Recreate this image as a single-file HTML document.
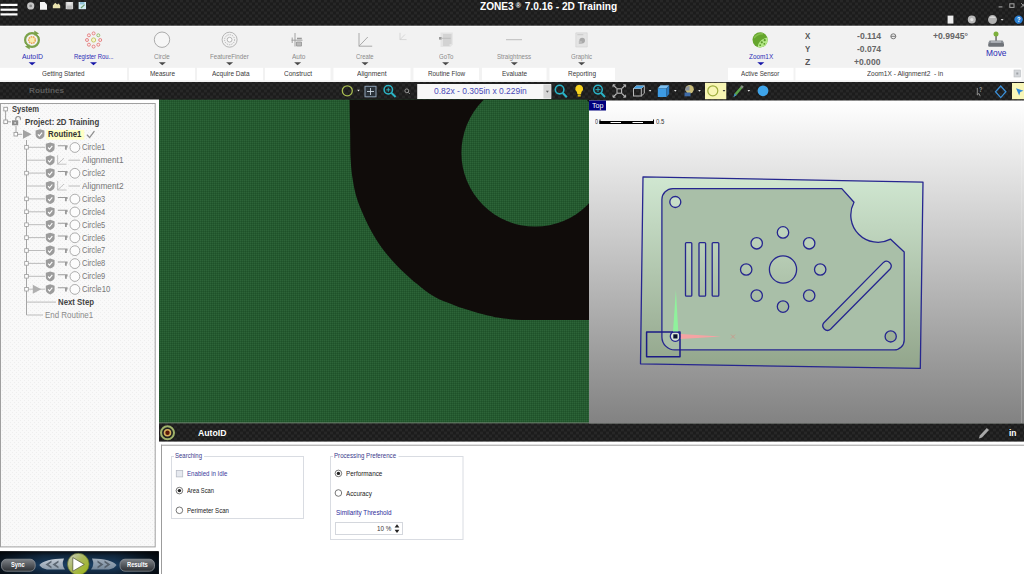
<!DOCTYPE html>
<html lang="en">
<head>
<meta charset="utf-8">
<title>ZONE3 7.0.16 - 2D Training</title>
<style>
html,body{margin:0;padding:0;width:1024px;height:574px;overflow:hidden;background:#1e1e1e;}
body{position:relative;font-family:"Liberation Sans",sans-serif;}
#bg{position:absolute;left:0;top:0;width:1024px;height:574px;display:block;}
.t{position:absolute;white-space:nowrap;line-height:1;transform-origin:0 50%;margin:0;padding:0;}
.b{font-weight:bold;}
</style>
</head>
<body>
<svg id="bg" width="1024" height="574" viewBox="0 0 1024 574">
<defs>
  <pattern id="carbon" width="6" height="6" patternUnits="userSpaceOnUse">
    <rect width="6" height="6" fill="#202020"/>
    <rect x="0" y="0" width="3" height="2" fill="#272727"/>
    <rect x="3" y="3" width="3" height="2" fill="#272727"/>
    <rect x="3" y="0" width="3" height="2" fill="#1c1c1c"/>
    <rect x="0" y="3" width="3" height="2" fill="#1c1c1c"/>
  </pattern>
  <pattern id="noise" width="2" height="2" patternUnits="userSpaceOnUse">
    <rect width="2" height="2" fill="#255a30"/>
    <rect x="0" y="0" width="1" height="1" fill="#2d6438"/>
    <rect x="1" y="1" width="1" height="1" fill="#1f5129"/>
  </pattern>
  <pattern id="dots" width="4" height="4" patternUnits="userSpaceOnUse">
    <rect width="4" height="4" fill="#f9f9f9"/>
    <rect x="0" y="0" width="1" height="1" fill="#eeeeee"/>
    <rect x="2" y="2" width="1" height="1" fill="#eeeeee"/>
  </pattern>
  <linearGradient id="g3d" x1="0" y1="0" x2="0" y2="1">
    <stop offset="0" stop-color="#ffffff"/>
    <stop offset="1" stop-color="#828282"/>
  </linearGradient>
  <linearGradient id="gpart" gradientUnits="userSpaceOnUse" x1="0" y1="177" x2="0" y2="369">
    <stop offset="0" stop-color="#d0e7d1"/>
    <stop offset="1" stop-color="#92a58b"/>
  </linearGradient>
  <linearGradient id="gplayer" x1="0" y1="0" x2="0" y2="1">
    <stop offset="0" stop-color="#080d14"/>
    <stop offset="0.18" stop-color="#10253a"/>
    <stop offset="0.6" stop-color="#1b3f63"/>
    <stop offset="1" stop-color="#0f2236"/>
  </linearGradient>
  <linearGradient id="gbtn" x1="0" y1="0" x2="0" y2="1">
    <stop offset="0" stop-color="#7f8388"/>
    <stop offset="0.5" stop-color="#54585d"/>
    <stop offset="1" stop-color="#2c2f33"/>
  </linearGradient>
  <linearGradient id="gplay" x1="0.1" y1="0.1" x2="0.9" y2="0.9">
    <stop offset="0" stop-color="#c6cbb4"/>
    <stop offset="0.45" stop-color="#a9b75a"/>
    <stop offset="1" stop-color="#9db51f"/>
  </linearGradient>
  <linearGradient id="gwing" x1="0" y1="0" x2="0" y2="1">
    <stop offset="0" stop-color="#c3ccd6"/>
    <stop offset="1" stop-color="#8d9cab"/>
  </linearGradient>
  <linearGradient id="gpedge" x1="0" y1="0" x2="1" y2="0">
    <stop offset="0" stop-color="#000" stop-opacity="0.650"/>
    <stop offset="0.28" stop-color="#000" stop-opacity="0"/>
    <stop offset="0.72" stop-color="#000" stop-opacity="0"/>
    <stop offset="1" stop-color="#000" stop-opacity="0.750"/>
  </linearGradient>
  <clipPath id="camclip"><rect x="159" y="99.700" width="430" height="323.100"/></clipPath>
</defs>
<!-- dark chrome -->
<rect x="0" y="0" width="1024" height="574" fill="url(#carbon)"/>
<!-- ribbon -->
<rect x="0" y="25.700" width="1024" height="56.300" fill="#f2f2f2"/>
<rect x="0" y="26" width="1024" height="1" fill="#fafafa"/>
<g fill="#ffffff">
  <rect x="0" y="67.800" width="127" height="12.500"/>
  <rect x="129" y="67.800" width="66" height="12.500"/>
  <rect x="197" y="67.800" width="66" height="12.500"/>
  <rect x="265" y="67.800" width="65.5" height="12.500"/>
  <rect x="333.5" y="67.800" width="77" height="12.500"/>
  <rect x="413.5" y="67.800" width="65.5" height="12.500"/>
  <rect x="482" y="67.800" width="64.5" height="12.500"/>
  <rect x="549.5" y="67.800" width="65.5" height="12.500"/>
  <rect x="728" y="67.800" width="65.5" height="12.500"/>
  <rect x="795.500" y="67.800" width="226" height="12.500"/>
</g>
<!-- left panel -->
<rect x="0" y="99.500" width="159" height="452" fill="#ffffff"/>
<rect x="0.500" y="103.500" width="154.700" height="443.400" fill="url(#dots)" stroke="#a0a0a0" stroke-width="1"/>
<!-- camera view -->
<rect x="159" y="99.700" width="430" height="323.100" fill="url(#noise)"/>
<rect x="159" y="422.500" width="865" height="0.800" fill="#7f947f"/>
<g clip-path="url(#camclip)">
  <path d="M349.6 99.0 C349.7 104.2 349.9 119.8 350.1 130.0 C350.3 140.2 350.2 151.7 350.7 160.0 C351.1 168.3 351.8 173.8 352.8 180.0 C353.8 186.2 354.9 191.7 356.6 197.4 C358.3 203.2 360.7 208.8 363.2 214.5 C365.7 220.2 368.3 225.8 371.5 231.5 C374.7 237.2 378.1 242.8 382.3 248.5 C386.5 254.2 392.0 260.4 396.8 265.5 C401.6 270.6 407.0 275.4 411.0 279.0 C415.0 282.6 417.5 284.4 420.7 286.9 C423.9 289.4 426.9 291.9 430.0 294.0 C433.1 296.1 436.0 297.7 439.1 299.2 C442.2 300.7 445.6 301.8 448.8 303.1 C452.1 304.4 455.3 305.9 458.6 307.0 C461.9 308.1 465.1 309.0 468.4 310.0 C471.6 311.0 474.9 312.1 478.1 313.0 C481.4 313.9 484.6 314.7 487.9 315.5 C491.2 316.3 494.0 317.0 497.7 317.6 C501.4 318.2 505.9 318.8 510.0 319.2 C514.0 319.6 517.8 319.8 522.0 319.9 C526.2 320.0 523.7 320.0 535.0 320.0 C546.3 320.0 580.8 320.0 590.0 320.0 L590 99 Z" fill="#100c0a"/>
  <circle cx="535.200" cy="152.800" r="73.800" fill="url(#noise)"/>
</g>
<!-- 3D view -->
<rect x="589" y="100.500" width="435" height="323" fill="url(#g3d)"/>
<!-- AutoID bar is carbon already: 423-442 -->
<!-- bottom panel -->
<rect x="159" y="441.600" width="865" height="133" fill="#ffffff"/>
<rect x="161" y="444.700" width="863" height="1" fill="#9c9c9c"/>
<rect x="161" y="444.700" width="1" height="130" fill="#9c9c9c"/>
<!-- player bar -->
<rect x="0" y="551.300" width="158.500" height="23" fill="url(#gplayer)"/>
<rect x="0" y="551.300" width="158.500" height="23" fill="url(#gpedge)"/>
<!-- 3D view label + scale bar -->
<rect x="589" y="100.500" width="17" height="10" fill="#00007e"/>
<g>
  <rect x="599.500" y="121" width="54.500" height="3" fill="#000"/>
  <rect x="610.500" y="122" width="10.500" height="1" fill="#fff"/>
  <rect x="632.500" y="122" width="10.500" height="1" fill="#fff"/>
  <rect x="599.500" y="119.500" width="1" height="4.500" fill="#000"/>
  <rect x="653" y="119.500" width="1" height="4.500" fill="#000"/>
</g>
<rect x="1021" y="100.500" width="1" height="322.500" fill="#ffffff" opacity="0.180"/>
<!-- part model -->
<g fill="none" stroke="#26268f" stroke-width="1.300" stroke-linejoin="round">
  <path d="M643 176.800 L923 182.100 L920.300 368.400 L640.500 363.800 Z" fill="url(#gpart)"/>
  <path d="M673 188.600 L841.800 188.600 L854 202.300 A27.200 27.200 0 0 0 890.600 239.200 L904.200 252 L904.200 339.900 A10 10 0 0 1 894.200 349.900 L674.900 349.900 A13 13 0 0 1 661.900 336.900 L661.900 199.600 A11 11 0 0 1 673 188.600 Z" fill="#a9bfa8"/>
  <g fill="url(#gpart)">
  <circle cx="675.300" cy="202" r="5.500"/>
  <circle cx="890.700" cy="336.400" r="5.600"/>
  <rect x="685.500" y="242.600" width="6.300" height="53.600" rx="1"/>
  <rect x="699" y="242.600" width="6.600" height="53.600" rx="1"/>
  <rect x="712.200" y="242.600" width="6.600" height="53.600" rx="1"/>
  <circle cx="783" cy="269.500" r="13.600"/>
  <circle cx="783" cy="232.400" r="5.700"/>
  <circle cx="783" cy="306.600" r="5.700"/>
  <circle cx="746.200" cy="269.500" r="5.700"/>
  <circle cx="820.200" cy="269.500" r="5.700"/>
  <circle cx="756.700" cy="243.300" r="5.700"/>
  <circle cx="809.200" cy="243.300" r="5.700"/>
  <circle cx="756.700" cy="295.600" r="5.700"/>
  <circle cx="809.200" cy="295.600" r="5.700"/>
  <path d="M823.900 322.700 L883.500 262.400 A4.700 4.700 0 0 1 890.100 269 L830.500 329.300 A4.700 4.700 0 0 1 823.900 322.700 Z"/>
  <circle cx="675.300" cy="336.300" r="5" fill="#dbe6d8"/>
  </g>
  <rect x="646.600" y="332" width="33.400" height="24.700" stroke="#1b1b85" stroke-width="1.500"/>
</g>
<!-- axes -->
<path d="M673 331.500 L678.300 331.500 L675.900 290 Z" fill="#8ff29c"/>
<path d="M680.800 333.900 L680.800 339 L721 336.600 Z" fill="#f5a3a3"/>
<path d="M731 334.600 L735 338.600 M735 334.600 L731 338.600" stroke="#c99a8a" stroke-width="0.900" fill="none"/>
<rect x="673.300" y="334.300" width="4.200" height="4.200" fill="#0a1230"/>
<!-- title bar: hamburger + quick icons -->
<g fill="#ffffff">
  <rect x="0.500" y="3.800" width="17" height="2.200"/>
  <rect x="0.500" y="8.600" width="17" height="2.200"/>
  <rect x="0.500" y="13.300" width="17" height="2.200"/>
</g>
<circle cx="30.700" cy="5.900" r="3.600" fill="#c6c6c6"/>
<circle cx="30.700" cy="5.900" r="1.400" fill="#8a8a8a"/>
<path d="M40 2 H44.600 L47 4.400 V9.800 H40 Z" fill="#f6f6f6"/>
<path d="M52.800 5.400 L55.200 2.800 L57.200 4.600 L58.600 3.400 L60.200 5.600 L60.200 8.200 H52.800 Z" fill="#e9e2ae"/>
<rect x="65.700" y="2" width="7.400" height="7.200" fill="#cfcfcf"/>
<rect x="67.200" y="2" width="4.400" height="2.600" fill="#e6e6e6"/>
<rect x="67" y="6" width="4.800" height="3.200" fill="#bdbdbd"/>
<rect x="78.600" y="2" width="7.400" height="7.200" fill="#d3eaf2"/>
<rect x="80" y="2" width="4.400" height="2.400" fill="#8fc1d6"/>
<path d="M81 8 L84.600 4.600" stroke="#6fa070" stroke-width="1.200"/>
<!-- window controls -->
<rect x="998.600" y="6.300" width="3.800" height="1.200" fill="#9b9b9b"/>
<rect x="1009.800" y="3.800" width="4.200" height="3.600" fill="none" stroke="#a5a5a5" stroke-width="1"/>
<path d="M1021.200 3.200 L1025 7.400 M1025 3.200 L1021.200 7.400" stroke="#a0a0a0" stroke-width="1"/>
<!-- title bar right icons -->
<path d="M947.600 15.600 H953.400 V23.600 H947.600 Z" fill="#ededed"/>
<circle cx="971.800" cy="19.600" r="4" fill="#b9b9b9"/>
<circle cx="971.800" cy="19.600" r="1.600" fill="#e2e2e2"/>
<circle cx="992.500" cy="19.600" r="4.500" fill="#b2b2b2"/>
<path d="M989 18 A4.500 4.500 0 0 1 996 18 Z" fill="#d9d9d9"/>
<path d="M1000.600 19 H1003.600 L1002.100 20.800 Z" fill="#d0d0d0"/>
<circle cx="1018.600" cy="19.600" r="4.200" fill="#2b7fd3"/>
<!-- ribbon icons -->
<!-- AutoID -->
<g fill="none">
  <circle cx="32" cy="40" r="6.900" stroke="#7ba24a" stroke-width="2.200"/>
  <path d="M34.200 30.600 L39 33.400 L34.600 35.800 Z" fill="#7ba24a"/>
  <path d="M29.800 49.400 L25 46.600 L29.400 44.200 Z" fill="#7ba24a"/>
  <path d="M37.300 34.300 L39.800 36.600" stroke="#f2f2f2" stroke-width="0.900"/>
  <path d="M26.700 45.700 L24.200 43.400" stroke="#f2f2f2" stroke-width="0.900"/>
  <circle cx="32" cy="40" r="3.300" stroke="#e8a45a" stroke-width="1.500" stroke-dasharray="1.600 0.700" fill="#f8edb0"/>
</g>
<!-- Register Routine -->
<g fill="#fbeaea" stroke="#e27d7d" stroke-width="0.900">
  <circle cx="93.600" cy="33.400" r="1.500"/>
  <circle cx="88.900" cy="35.300" r="1.500"/>
  <circle cx="87" cy="40" r="1.500"/>
  <circle cx="88.900" cy="44.700" r="1.500"/>
  <circle cx="93.600" cy="46.600" r="1.500"/>
  <circle cx="98.300" cy="44.700" r="1.500"/>
  <circle cx="100.200" cy="40" r="1.500"/>
  <circle cx="98.300" cy="35.300" r="1.500" stroke="#8dbb66" fill="#eef6e6"/>
  <circle cx="93.600" cy="40" r="2.100" stroke="#c3c45a" fill="#f6f5cf"/>
</g>
<!-- Circle -->
<circle cx="162" cy="39.700" r="7.700" fill="#f6f6f6" stroke="#a3a3a3" stroke-width="0.900"/>
<!-- FeatureFinder -->
<g fill="none" stroke="#a6a6a6" stroke-width="0.800">
  <circle cx="229.600" cy="39.700" r="7.500"/>
  <circle cx="229.600" cy="39.700" r="5" stroke-dasharray="1.300 1"/>
  <circle cx="229.600" cy="39.700" r="2.400" fill="#fbfbfb"/>
</g>
<!-- Auto -->
<g fill="none" stroke="#9a9a9a" stroke-width="0.900">
  <path d="M295 33 V46.500 M291.500 40.200 H302.500 M292.200 37.500 V43"/>
  <path d="M296.500 42 H301.500 V46 H296.500 Z" fill="#b9b9b9"/>
  <path d="M297 38.500 L301.800 38.500" stroke-width="1.600"/>
</g>
<!-- Create -->
<g fill="none" stroke="#a2a2a2" stroke-width="0.900">
  <path d="M359 33 V46.200 H372.200"/>
  <path d="M359 46.200 L367.800 37"/>
</g>
<g fill="none" stroke="#cfcfcf" stroke-width="0.800">
  <path d="M400 32.800 V39.600 H406.500 M400 39.600 L405 34.500"/>
</g>
<!-- GoTo -->
<g>
  <path d="M440.500 32.500 H452.800 V44.500 L450.300 47 H440.500 Z" fill="#e4e4e4"/>
  <g stroke="#b9b9b9" stroke-width="0.800">
    <path d="M443 35 H451.500 M443 37 H451.500 M443 39 H451.500 M443 41 H451.500 M443 43 H451.500 M443 45 H449.500"/>
  </g>
  <rect x="439" y="37" width="2.600" height="2.600" fill="#9a9a9a"/><rect x="441.600" y="37.800" width="9" height="1" fill="#bdbdbd"/>
</g>
<!-- Straightness -->
<rect x="506" y="39.200" width="16" height="1" fill="#bcbcbc"/>
<!-- Graphic -->
<g>
  <path d="M575.800 32.800 H587.200 V47 H575.800 Z" fill="#e4e4e4" stroke="#d2d2d2" stroke-width="0.600"/>
  <rect x="577.300" y="34.200" width="6" height="1" fill="#c9c9c9"/>
  <circle cx="582.200" cy="40.600" r="2.800" fill="#a9a9a9"/>
  <rect x="578.800" y="41" width="3" height="3" fill="#bdbdbd"/>
</g>
<!-- Zoom1X -->
<circle cx="760.100" cy="39.800" r="7.600" fill="#65a52d"/>
<g>
  <path d="M757.600 46.900 Q758.600 39.600 767.300 37.400 A7.600 7.600 0 0 1 757.600 46.900 Z" fill="#b3e887"/>
  <circle cx="761.800" cy="42.300" r="1.100" fill="#5b9a2a"/>
  <circle cx="764.700" cy="40.200" r="1.100" fill="#5b9a2a"/>
  <circle cx="760.200" cy="45.200" r="0.900" fill="#5b9a2a"/>
  <circle cx="764.300" cy="43.800" r="0.900" fill="#5b9a2a"/>
  <path d="M754 38 Q757.500 33.500 763 33.800" fill="none" stroke="#86c04c" stroke-width="1.400"/>
</g>
<!-- theta -->
<g fill="none" stroke="#6a6a6a" stroke-width="0.900">
  <circle cx="893.300" cy="36.300" r="2.500"/>
  <path d="M891 36.300 H895.600"/>
</g>
<!-- Move joystick -->
<g>
  <rect x="995.300" y="35" width="1.500" height="6" fill="#6b6b6b"/>
  <circle cx="996" cy="33.900" r="2.500" fill="#7db03c"/>
  <path d="M989.600 40.600 H1002.600 L1004 43 H988.200 Z" fill="#8a8f96"/>
  <rect x="988.200" y="43" width="15.800" height="3.700" rx="1" fill="#6f7379"/>
  <rect x="991" y="41.400" width="10" height="1.100" fill="#c2c6cb"/>
</g>
<!-- status box end icon -->
<rect x="1014" y="70" width="6.500" height="7" fill="#d4d7db" stroke="#b9bcc0" stroke-width="0.600"/>
<rect x="1016.300" y="72.500" width="2" height="2" fill="#9da1a6"/>
<!-- dropdown arrows under ribbon buttons -->
<g fill="#1616a8">
  <path d="M28.600 62.200 H35.600 L32.100 65.300 Z"/>
  <path d="M90 62.200 H97 L93.500 65.300 Z"/>
  <path d="M757.300 62.200 H764.300 L760.800 65.300 Z"/>
</g>
<g fill="#4a4a4a">
  <path d="M158.800 62.200 H165.800 L162.300 65.300 Z"/>
  <path d="M226.100 62.200 H233.100 L229.600 65.300 Z"/>
  <path d="M294.100 62.200 H301.100 L297.600 65.300 Z"/>
  <path d="M361.500 62.200 H368.500 L365 65.300 Z"/>
  <path d="M442.100 62.200 H449.100 L445.600 65.300 Z"/>
  <path d="M510.800 62.200 H517.800 L514.300 65.300 Z"/>
  <path d="M578.100 62.200 H585.100 L581.600 65.300 Z"/>
</g>
<!-- toolbar row y 82-99 -->
<circle cx="347.300" cy="90.800" r="5" fill="none" stroke="#a9bd52" stroke-width="1.300"/>
<path d="M357.200 89.800 H359.800 L358.500 91.500 Z" fill="#e8e8e8"/>
<rect x="365" y="86.300" width="11" height="10.500" fill="#2a3138" stroke="#8ea2b6" stroke-width="1"/>
<path d="M370.500 88 V95 M367 91.500 H374" stroke="#c9d5e0" stroke-width="0.900"/>
<g fill="none" stroke="#2bb6c6" stroke-width="1.500">
  <circle cx="388.300" cy="89.800" r="4.200"/>
  <path d="M391.500 93 L395.600 97" stroke-width="2"/>
  <path d="M386.300 89.800 H390.300 M388.300 87.800 V91.800" stroke-width="0.900"/>
</g>
<g fill="none" stroke="#a0a0a0" stroke-width="0.900">
  <circle cx="406.800" cy="90.800" r="1.900"/>
  <path d="M408.200 92.300 L409.800 94"/>
</g>
<rect x="417.200" y="84" width="134" height="15" fill="#f7f7f7"/>
<rect x="543.400" y="84.500" width="7.800" height="14" fill="#d6d6d6"/>
<path d="M545.900 90.800 H548.900 L547.400 92.800 Z" fill="#5c5c5c"/>
<!-- search -->
<g fill="none" stroke="#2ab3c6" stroke-width="1.600">
  <circle cx="559.600" cy="89.600" r="4.300"/>
  <path d="M562.800 93 L566.800 97.200" stroke-width="2.100"/>
</g>
<!-- bulb -->
<path d="M579.200 84.800 A3.900 3.900 0 0 1 581.600 91.800 L581 94 H577.400 L576.800 91.800 A3.900 3.900 0 0 1 579.200 84.800 Z" fill="#f6d21e"/>
<rect x="577.700" y="94.400" width="3" height="2.200" fill="#d9b514"/>
<!-- zoom fit -->
<g fill="none" stroke="#2ab3c6" stroke-width="1.500">
  <circle cx="598" cy="89.600" r="4.300"/>
  <path d="M601.200 93 L605 97" stroke-width="2"/>
  <path d="M595.500 89.600 H600.500 M598 87.100 V92.100" stroke-width="0.900"/>
</g>
<!-- extents -->
<g fill="none" stroke="#b9b9b9" stroke-width="1.100">
  <rect x="617" y="88.800" width="4.600" height="4.400"/>
  <path d="M616.600 88.400 L613.200 85 M622 88.400 L625.400 85 M616.600 93.600 L613.200 97 M622 93.600 L625.400 97"/>
  <path d="M613 87.300 V84.800 H615.500 M623.100 84.800 H625.600 V87.300 M613 94.700 V97.200 H615.500 M623.100 97.200 H625.600 V94.700" stroke-width="0.900"/>
</g>
<!-- wire box -->
<g fill="none" stroke="#b9b9b9" stroke-width="1">
  <rect x="633.500" y="88.500" width="7.800" height="7.500"/>
  <path d="M633.500 88.500 L636.300 85.800 H644.300 L641.300 88.500 M644.300 85.800 V93.300 L641.300 96"/>
  <path d="M636.300 85.800 H644.300 L641.300 88.500 H633.500 Z" fill="#4aa2e0" stroke="none"/>
</g>
<path d="M648.800 90 H651.400 L650.100 91.700 Z" fill="#e8e8e8"/>
<!-- blue cube -->
<path d="M657.800 88.300 H666.500 V97 H657.800 Z" fill="#3d9be4"/>
<path d="M657.800 88.300 L660.500 85.300 H669.200 L666.500 88.300 Z" fill="#7cc0f2"/>
<path d="M666.500 88.300 L669.200 85.300 V94 L666.500 97 Z" fill="#2a78bd"/>
<path d="M674 90 H676.600 L675.300 91.700 Z" fill="#e8e8e8"/>
<!-- render style icon -->
<circle cx="689.600" cy="89.300" r="4.200" fill="#c9bd7a"/>
<path d="M685 90.500 A4.500 4.500 0 0 1 689.500 86 V90.500 Z" fill="#8c93a0"/>
<rect x="684.500" y="92.500" width="6" height="3.800" fill="#3e6aa6"/>
<path d="M698.200 90 H700.800 L699.500 91.700 Z" fill="#e8e8e8"/>
<!-- highlighted circle button -->
<rect x="705" y="82.800" width="21.300" height="16.400" fill="#f8f6b4"/>
<circle cx="712.800" cy="90.800" r="5" fill="none" stroke="#9fae3f" stroke-width="1.200"/>
<path d="M722.700 90 H725.300 L724 91.700 Z" fill="#333"/>
<!-- pen -->
<path d="M733.500 97 L734.600 93.600 L741.800 85.200 L743.600 86.800 L736.400 95.200 Z" fill="#5aa34a"/>
<path d="M733.500 97 L734.600 93.600 L736.400 95.200 Z" fill="#3f83cf"/>
<path d="M740.300 86.900 L741.800 85.200 L743.600 86.800 L742.100 88.500 Z" fill="#8a8a8a"/>
<path d="M747.500 90 H750.100 L748.800 91.700 Z" fill="#e8e8e8"/>
<!-- blue ball -->
<circle cx="763" cy="90.800" r="5.400" fill="#3ea4ea"/>
<!-- right: help cursor, diamond, pointer -->
<path d="M977.300 88 L977.300 95 L979 93.400 L980.200 96.200" stroke="#9a9a9a" stroke-width="0.900" fill="none"/>
<path d="M1000.700 86 L1005.900 91.800 L1000.700 97.600 L995.500 91.800 Z" fill="none" stroke="#3b8fd8" stroke-width="1.300"/>
<rect x="1012" y="83" width="12" height="16.200" fill="#f8f6b8"/>
<path d="M1016 88.200 L1023.500 90.700 L1020.300 92 L1019.200 95.600 Z" fill="#2a86d8"/>
<!-- tree -->
<rect x="46.300" y="129.800" width="38" height="9.800" fill="#ffffc4"/>
<g fill="none" stroke="#9b9b9b" stroke-width="0.900">
<rect x="3.800" y="107.300" width="3.600" height="3.600" fill="#fff"/>
<path d="M5.600 111 V120"/>
<rect x="3.800" y="120" width="3.600" height="3.600" fill="#fff"/>
<path d="M7.400 121.800 H11"/>
<path d="M16 126 V132"/>
<rect x="14" y="132.400" width="3.600" height="3.600" fill="#fff"/>
<path d="M17.600 134.300 H22"/>
<path d="M26.500 140 V315"/>
</g>
<g><rect x="12" y="120.300" width="6.200" height="5" fill="#8d8d8d"/><path d="M15.800 120.300 V118.800 A2.300 2.300 0 0 1 20.400 118.800 V119.800" fill="none" stroke="#8d8d8d" stroke-width="1.100"/><rect x="14.500" y="122" width="1.200" height="1.800" fill="#e8e8e8"/></g>
<path d="M23.0 129.8 L31.6 134.3 L23.0 138.8 Z" fill="#a3a3a3"/>
<path d="M35.6 130.6 l4.400 -1.400 l4.400 1.400 v4.100 q0 3 -4.400 4.600 q-4.400 -1.600 -4.400 -4.600 Z" fill="#9c9c9c"/><path d="M37.9 134.3 l1.500 1.600 l2.700 -3.300" fill="none" stroke="#fff" stroke-width="1.100"/>
<path d="M87 134.800 L89.600 137.600 L94.400 131.200" fill="none" stroke="#8f8f8f" stroke-width="1.300"/>
<path d="M26.500 147.3 H45" stroke="#b4b4b4" stroke-width="0.900"/>
<rect x="24.700" y="145.5" width="3.600" height="3.600" fill="#fff" stroke="#9b9b9b" stroke-width="0.800"/>
<path d="M45.8 143.8 l4.400 -1.400 l4.400 1.400 v4.100 q0 3 -4.400 4.600 q-4.400 -1.600 -4.400 -4.600 Z" fill="#9c9c9c"/><path d="M48.1 147.5 l1.500 1.600 l2.700 -3.300" fill="none" stroke="#fff" stroke-width="1.100"/>
<path d="M57.800 145.3 H67.600 V147.5 H66.800 V149.7 H65 V146.3 H57.800 Z" fill="#9a9a9a"/>
<circle cx="74.900" cy="147.5" r="4.900" fill="#fcfcfc" stroke="#a4a4a4" stroke-width="0.900"/>
<path d="M26.500 160.2 H45" stroke="#b4b4b4" stroke-width="0.900"/>
<path d="M45.8 156.7 l4.400 -1.400 l4.400 1.400 v4.100 q0 3 -4.400 4.600 q-4.400 -1.600 -4.400 -4.600 Z" fill="#9c9c9c"/><path d="M48.1 160.4 l1.500 1.600 l2.700 -3.300" fill="none" stroke="#fff" stroke-width="1.100"/>
<path d="M57.600 155.2 V164.2 H66.500 M57.600 164.2 L64 158.2" fill="none" stroke="#bdbdbd" stroke-width="0.900"/>
<path d="M68.500 160.2 H80" stroke="#b4b4b4" stroke-width="0.900"/>
<path d="M26.500 173.1 H45" stroke="#b4b4b4" stroke-width="0.900"/>
<rect x="24.700" y="171.3" width="3.600" height="3.600" fill="#fff" stroke="#9b9b9b" stroke-width="0.800"/>
<path d="M45.8 169.6 l4.400 -1.400 l4.400 1.400 v4.100 q0 3 -4.400 4.600 q-4.400 -1.600 -4.400 -4.600 Z" fill="#9c9c9c"/><path d="M48.1 173.3 l1.500 1.600 l2.700 -3.300" fill="none" stroke="#fff" stroke-width="1.100"/>
<path d="M57.800 171.1 H67.600 V173.3 H66.800 V175.5 H65 V172.1 H57.800 Z" fill="#9a9a9a"/>
<circle cx="74.900" cy="173.3" r="4.900" fill="#fcfcfc" stroke="#a4a4a4" stroke-width="0.900"/>
<path d="M26.500 186.0 H45" stroke="#b4b4b4" stroke-width="0.900"/>
<path d="M45.8 182.5 l4.400 -1.400 l4.400 1.400 v4.100 q0 3 -4.400 4.600 q-4.400 -1.600 -4.400 -4.600 Z" fill="#9c9c9c"/><path d="M48.1 186.2 l1.500 1.600 l2.700 -3.300" fill="none" stroke="#fff" stroke-width="1.100"/>
<path d="M57.600 181.0 V190.0 H66.500 M57.600 190.0 L64 184.0" fill="none" stroke="#bdbdbd" stroke-width="0.900"/>
<path d="M68.500 186.0 H80" stroke="#b4b4b4" stroke-width="0.900"/>
<path d="M26.500 198.9 H45" stroke="#b4b4b4" stroke-width="0.900"/>
<rect x="24.700" y="197.1" width="3.600" height="3.600" fill="#fff" stroke="#9b9b9b" stroke-width="0.800"/>
<path d="M45.8 195.4 l4.400 -1.400 l4.400 1.400 v4.100 q0 3 -4.400 4.600 q-4.400 -1.600 -4.400 -4.600 Z" fill="#9c9c9c"/><path d="M48.1 199.1 l1.500 1.600 l2.700 -3.300" fill="none" stroke="#fff" stroke-width="1.100"/>
<path d="M57.800 196.9 H67.600 V199.1 H66.800 V201.3 H65 V197.9 H57.800 Z" fill="#9a9a9a"/>
<circle cx="74.900" cy="199.1" r="4.900" fill="#fcfcfc" stroke="#a4a4a4" stroke-width="0.900"/>
<path d="M26.500 211.8 H45" stroke="#b4b4b4" stroke-width="0.900"/>
<rect x="24.700" y="210.0" width="3.600" height="3.600" fill="#fff" stroke="#9b9b9b" stroke-width="0.800"/>
<path d="M45.8 208.3 l4.400 -1.400 l4.400 1.400 v4.100 q0 3 -4.400 4.600 q-4.400 -1.600 -4.400 -4.600 Z" fill="#9c9c9c"/><path d="M48.1 212.0 l1.500 1.600 l2.700 -3.300" fill="none" stroke="#fff" stroke-width="1.100"/>
<path d="M57.800 209.8 H67.600 V212.0 H66.800 V214.2 H65 V210.8 H57.800 Z" fill="#9a9a9a"/>
<circle cx="74.900" cy="212.0" r="4.900" fill="#fcfcfc" stroke="#a4a4a4" stroke-width="0.900"/>
<path d="M26.500 224.7 H45" stroke="#b4b4b4" stroke-width="0.900"/>
<rect x="24.700" y="222.9" width="3.600" height="3.600" fill="#fff" stroke="#9b9b9b" stroke-width="0.800"/>
<path d="M45.8 221.2 l4.400 -1.400 l4.400 1.400 v4.100 q0 3 -4.400 4.600 q-4.400 -1.600 -4.400 -4.600 Z" fill="#9c9c9c"/><path d="M48.1 224.9 l1.500 1.600 l2.700 -3.300" fill="none" stroke="#fff" stroke-width="1.100"/>
<path d="M57.800 222.7 H67.600 V224.9 H66.800 V227.1 H65 V223.7 H57.800 Z" fill="#9a9a9a"/>
<circle cx="74.900" cy="224.9" r="4.900" fill="#fcfcfc" stroke="#a4a4a4" stroke-width="0.900"/>
<path d="M26.500 237.6 H45" stroke="#b4b4b4" stroke-width="0.900"/>
<rect x="24.700" y="235.8" width="3.600" height="3.600" fill="#fff" stroke="#9b9b9b" stroke-width="0.800"/>
<path d="M45.8 234.1 l4.400 -1.400 l4.400 1.400 v4.100 q0 3 -4.400 4.600 q-4.400 -1.600 -4.400 -4.600 Z" fill="#9c9c9c"/><path d="M48.1 237.8 l1.500 1.600 l2.700 -3.300" fill="none" stroke="#fff" stroke-width="1.100"/>
<path d="M57.800 235.6 H67.600 V237.8 H66.800 V240.0 H65 V236.6 H57.800 Z" fill="#9a9a9a"/>
<circle cx="74.900" cy="237.8" r="4.900" fill="#fcfcfc" stroke="#a4a4a4" stroke-width="0.900"/>
<path d="M26.500 250.5 H45" stroke="#b4b4b4" stroke-width="0.900"/>
<rect x="24.700" y="248.7" width="3.600" height="3.600" fill="#fff" stroke="#9b9b9b" stroke-width="0.800"/>
<path d="M45.8 247.0 l4.400 -1.400 l4.400 1.400 v4.100 q0 3 -4.400 4.600 q-4.400 -1.600 -4.400 -4.600 Z" fill="#9c9c9c"/><path d="M48.1 250.7 l1.500 1.600 l2.700 -3.300" fill="none" stroke="#fff" stroke-width="1.100"/>
<path d="M57.800 248.5 H67.600 V250.7 H66.800 V252.9 H65 V249.5 H57.800 Z" fill="#9a9a9a"/>
<circle cx="74.900" cy="250.7" r="4.900" fill="#fcfcfc" stroke="#a4a4a4" stroke-width="0.900"/>
<path d="M26.500 263.4 H45" stroke="#b4b4b4" stroke-width="0.900"/>
<rect x="24.700" y="261.6" width="3.600" height="3.600" fill="#fff" stroke="#9b9b9b" stroke-width="0.800"/>
<path d="M45.8 259.9 l4.400 -1.400 l4.400 1.400 v4.100 q0 3 -4.400 4.600 q-4.400 -1.600 -4.400 -4.600 Z" fill="#9c9c9c"/><path d="M48.1 263.6 l1.500 1.600 l2.700 -3.300" fill="none" stroke="#fff" stroke-width="1.100"/>
<path d="M57.800 261.4 H67.600 V263.6 H66.800 V265.8 H65 V262.4 H57.800 Z" fill="#9a9a9a"/>
<circle cx="74.900" cy="263.6" r="4.900" fill="#fcfcfc" stroke="#a4a4a4" stroke-width="0.900"/>
<path d="M26.500 276.3 H45" stroke="#b4b4b4" stroke-width="0.900"/>
<rect x="24.700" y="274.5" width="3.600" height="3.600" fill="#fff" stroke="#9b9b9b" stroke-width="0.800"/>
<path d="M45.8 272.8 l4.400 -1.400 l4.400 1.400 v4.100 q0 3 -4.400 4.600 q-4.400 -1.600 -4.400 -4.600 Z" fill="#9c9c9c"/><path d="M48.1 276.5 l1.500 1.600 l2.700 -3.300" fill="none" stroke="#fff" stroke-width="1.100"/>
<path d="M57.800 274.3 H67.600 V276.5 H66.800 V278.7 H65 V275.3 H57.800 Z" fill="#9a9a9a"/>
<circle cx="74.900" cy="276.5" r="4.900" fill="#fcfcfc" stroke="#a4a4a4" stroke-width="0.900"/>
<path d="M26.500 289.2 H45" stroke="#b4b4b4" stroke-width="0.900"/>
<rect x="24.700" y="287.4" width="3.600" height="3.600" fill="#fff" stroke="#9b9b9b" stroke-width="0.800"/>
<path d="M45.8 285.7 l4.400 -1.400 l4.400 1.400 v4.100 q0 3 -4.400 4.600 q-4.400 -1.600 -4.400 -4.600 Z" fill="#9c9c9c"/><path d="M48.1 289.4 l1.500 1.600 l2.700 -3.300" fill="none" stroke="#fff" stroke-width="1.100"/>
<path d="M57.800 287.2 H67.600 V289.4 H66.800 V291.6 H65 V288.2 H57.800 Z" fill="#9a9a9a"/>
<circle cx="74.900" cy="289.4" r="4.900" fill="#fcfcfc" stroke="#a4a4a4" stroke-width="0.900"/>
<path d="M32.8 284.7 L41.2 289.2 L32.8 293.7 Z" fill="#b0b0b0"/>
<path d="M26.500 302.100 H56" stroke="#b4b4b4" stroke-width="0.900"/>
<path d="M26.500 315 H43" stroke="#b4b4b4" stroke-width="0.900"/>
<!-- AutoID bar icon -->
<g fill="none">
  <circle cx="167.500" cy="432.800" r="6.500" stroke="#9fb26a" stroke-width="2"/>
  <circle cx="167.500" cy="432.800" r="3" stroke="#d6b25e" stroke-width="1.600" fill="#5a1808"/>
</g>
<!-- pencil -->
<path d="M978.800 438.400 L979.800 435.400 L986.800 428 L989 430 L982 437.400 Z" fill="#a9a9a9"/>
<!-- group boxes -->
<g fill="none" stroke="#d9dce2" stroke-width="1">
  <rect x="171.500" y="456.500" width="132" height="62"/>
  <rect x="330.500" y="456.500" width="132.500" height="83"/>
</g>
<rect x="174" y="452" width="30" height="8" fill="#fff"/>
<rect x="333" y="452" width="65.500" height="8" fill="#fff"/>
<!-- checkbox -->
<rect x="176.300" y="470.500" width="6.400" height="6.400" fill="#e6e9ef" stroke="#b7bcc6" stroke-width="0.800"/>
<!-- radios -->
<g fill="#fff" stroke="#555" stroke-width="0.800">
  <circle cx="179.400" cy="490.600" r="3.300"/>
  <circle cx="179.400" cy="510.300" r="3.300"/>
  <circle cx="338.400" cy="473.400" r="3.300"/>
  <circle cx="338.400" cy="493" r="3.300"/>
</g>
<circle cx="179.400" cy="490.600" r="1.700" fill="#222"/>
<circle cx="338.400" cy="473.400" r="1.700" fill="#222"/>
<!-- spinner -->
<rect x="335.500" y="522.500" width="67" height="12" fill="#fff" stroke="#d4d7dd" stroke-width="1"/>
<path d="M394.600 527.400 L397 524.200 L399.400 527.400 Z" fill="#222"/>
<path d="M394.600 529.800 L397 533 L399.400 529.800 Z" fill="#222"/>
<!-- player bar -->
<rect x="1.500" y="559.200" width="33.700" height="12" rx="5" fill="url(#gbtn)" stroke="#9a9ea3" stroke-width="0.700"/>
<rect x="120" y="559.200" width="34.500" height="12" rx="5" fill="url(#gbtn)" stroke="#9a9ea3" stroke-width="0.700"/>
<path d="M39.300 565 Q45 559 64 558.600 Q61 565 65 569.500 H47 Q41.500 568.500 39.300 565 Z" fill="url(#gwing)"/>
<path d="M116.500 565 Q111 559 92 558.600 Q95 565 91 569.500 H109 Q114.500 568.500 116.500 565 Z" fill="url(#gwing)" opacity="0.800"/>
<path d="M51.500 560.600 L45.500 564.600 L51.500 568.600 L51.500 566.600 L48.600 564.600 L51.500 562.600 Z M58.500 560.600 L52.500 564.600 L58.500 568.600 L58.500 566.600 L55.600 564.600 L58.500 562.600 Z" fill="#5d6873"/>
<path d="M97.500 560.600 L103.500 564.600 L97.500 568.600 L97.500 566.600 L100.400 564.600 L97.500 562.600 Z M104.500 560.600 L110.500 564.600 L104.500 568.600 L104.500 566.600 L107.400 564.600 L104.500 562.600 Z" fill="#56616c"/>
<circle cx="78.300" cy="564.100" r="10.800" fill="url(#gplay)" stroke="#5f6b2a" stroke-width="0.700"/>
<path d="M72.800 557.600 L84.300 564.400 L72.800 571.200 Z" fill="#ffffff" stroke="#4a5030" stroke-width="0.700"/>
</svg>
<!-- text layer -->
<header id="titlebar">
<span class="t b" style="left:480.2px;top:1.8px;font-size:10px;color:#ffffff;transform:scaleX(1.012);">ZONE3<span style="font-size:7px;position:relative;top:-2px;padding:0 1px 0 2px">®</span> 7.0.16 - 2D Training</span>
</header>
<nav id="ribbon">
<span class="t" style="left:22.0px;top:52.9px;font-size:7px;color:#2b2bb5;transform:scaleX(0.981);">AutoID</span>
<span class="t" style="left:74.0px;top:52.9px;font-size:7px;color:#2b2bb5;transform:scaleX(0.846);">Register Rou...</span>
<span class="t" style="left:154.4px;top:52.9px;font-size:7px;color:#8a8a8a;transform:scaleX(0.883);">Circle</span>
<span class="t" style="left:210.3px;top:52.9px;font-size:7px;color:#8a8a8a;transform:scaleX(0.880);">FeatureFinder</span>
<span class="t" style="left:291.5px;top:52.9px;font-size:7px;color:#8a8a8a;transform:scaleX(0.930);">Auto</span>
<span class="t" style="left:356.4px;top:52.9px;font-size:7px;color:#8a8a8a;transform:scaleX(0.837);">Create</span>
<span class="t" style="left:439.0px;top:52.9px;font-size:7px;color:#8a8a8a;transform:scaleX(0.861);">GoTo</span>
<span class="t" style="left:497.2px;top:52.9px;font-size:7px;color:#8a8a8a;transform:scaleX(0.876);">Straightness</span>
<span class="t" style="left:571.0px;top:52.9px;font-size:7px;color:#8a8a8a;transform:scaleX(0.861);">Graphic</span>
<span class="t" style="left:748.5px;top:52.9px;font-size:7px;color:#2b2bb5;transform:scaleX(0.914);">Zoom1X</span>
<span class="t" style="left:985.5px;top:49.4px;font-size:9px;color:#2b2bb5;transform:scaleX(0.931);">Move</span>
<span class="t" style="left:42.0px;top:70.2px;font-size:7px;color:#3a3a3a;transform:scaleX(0.902);">Getting Started</span>
<span class="t" style="left:149.5px;top:70.2px;font-size:7px;color:#3a3a3a;transform:scaleX(0.918);">Measure</span>
<span class="t" style="left:211.5px;top:70.2px;font-size:7px;color:#3a3a3a;transform:scaleX(0.927);">Acquire Data</span>
<span class="t" style="left:283.5px;top:70.2px;font-size:7px;color:#3a3a3a;transform:scaleX(0.934);">Construct</span>
<span class="t" style="left:357.0px;top:70.2px;font-size:7px;color:#3a3a3a;transform:scaleX(0.947);">Alignment</span>
<span class="t" style="left:427.5px;top:70.2px;font-size:7px;color:#3a3a3a;transform:scaleX(0.906);">Routine Flow</span>
<span class="t" style="left:501.5px;top:70.2px;font-size:7px;color:#3a3a3a;transform:scaleX(0.917);">Evaluate</span>
<span class="t" style="left:567.5px;top:70.2px;font-size:7px;color:#3a3a3a;transform:scaleX(0.922);">Reporting</span>
<span class="t" style="left:741.4px;top:70.2px;font-size:7px;color:#3a3a3a;transform:scaleX(0.889);">Active Sensor</span>
<span class="t" style="left:866.8px;top:70.2px;font-size:7px;color:#3a3a3a;transform:scaleX(0.941);">Zoom1X - Alignment2 &nbsp;- in</span>
<span class="t b" style="left:804.7px;top:31.9px;font-size:8.8px;color:#555555;transform:scaleX(0.902);">X</span>
<span class="t b" style="left:804.7px;top:44.5px;font-size:8.8px;color:#555555;transform:scaleX(0.902);">Y</span>
<span class="t b" style="left:804.7px;top:58.1px;font-size:8.8px;color:#555555;transform:scaleX(0.986);">Z</span>
<span class="t b" style="left:856.7px;top:31.9px;font-size:8.8px;color:#666666;transform:scaleX(0.985);">-0.114</span>
<span class="t b" style="left:856.7px;top:44.5px;font-size:8.8px;color:#666666;transform:scaleX(0.966);">-0.074</span>
<span class="t b" style="left:854.4px;top:58.1px;font-size:8.8px;color:#666666;transform:scaleX(0.972);">+0.000</span>
<span class="t b" style="left:933.0px;top:31.9px;font-size:8.8px;color:#666666;transform:scaleX(0.984);">+0.9945°</span>
</nav>
<div id="toolbar">
<span class="t b" style="left:28.8px;top:87.4px;font-size:7.8px;color:#5c5c5c;transform:scaleX(1.055);">Routines</span>
<span class="t" style="left:434.4px;top:87.4px;font-size:8.5px;color:#4a4ab8;transform:scaleX(0.997);">0.82x - 0.305in x 0.229in</span>
<span class="t b" style="left:1016.8px;top:16.4px;font-size:7px;color:#ffffff;transform:scaleX(0.841);">?</span>
<span class="t b" style="left:979.3px;top:86.2px;font-size:7px;color:#9a9a9a;transform:scaleX(0.771);">?</span>
</div>
<aside id="routine-tree">
<span class="t b" style="left:12.0px;top:105.1px;font-size:8.5px;color:#404040;transform:scaleX(0.896);">System</span>
<span class="t b" style="left:24.8px;top:117.5px;font-size:8.5px;color:#404040;transform:scaleX(0.924);">Project: 2D Training</span>
<span class="t b" style="left:47.6px;top:130.2px;font-size:8.5px;color:#333333;transform:scaleX(0.918);">Routine1</span>
<span class="t" style="left:82.3px;top:143.2px;font-size:8.7px;color:#777777;transform:scaleX(0.861);">Circle1</span>
<span class="t" style="left:82.3px;top:156.2px;font-size:8.7px;color:#777777;transform:scaleX(0.955);">Alignment1</span>
<span class="t" style="left:82.3px;top:169.1px;font-size:8.7px;color:#777777;transform:scaleX(0.861);">Circle2</span>
<span class="t" style="left:82.3px;top:181.9px;font-size:8.7px;color:#777777;transform:scaleX(0.955);">Alignment2</span>
<span class="t" style="left:82.3px;top:194.8px;font-size:8.7px;color:#777777;transform:scaleX(0.861);">Circle3</span>
<span class="t" style="left:82.3px;top:207.8px;font-size:8.7px;color:#777777;transform:scaleX(0.861);">Circle4</span>
<span class="t" style="left:82.3px;top:220.7px;font-size:8.7px;color:#777777;transform:scaleX(0.861);">Circle5</span>
<span class="t" style="left:82.3px;top:233.6px;font-size:8.7px;color:#777777;transform:scaleX(0.861);">Circle6</span>
<span class="t" style="left:82.3px;top:246.4px;font-size:8.7px;color:#777777;transform:scaleX(0.861);">Circle7</span>
<span class="t" style="left:82.3px;top:259.4px;font-size:8.7px;color:#777777;transform:scaleX(0.861);">Circle8</span>
<span class="t" style="left:82.3px;top:272.2px;font-size:8.7px;color:#777777;transform:scaleX(0.861);">Circle9</span>
<span class="t" style="left:82.3px;top:285.1px;font-size:8.7px;color:#777777;transform:scaleX(0.885);">Circle10</span>
<span class="t b" style="left:58.0px;top:298.2px;font-size:8.5px;color:#444444;transform:scaleX(0.918);">Next Step</span>
<span class="t" style="left:45.3px;top:310.9px;font-size:8.7px;color:#8a8a8a;transform:scaleX(0.915);">End Routine1</span>
</aside>
<section id="view3d">
<span class="t" style="left:591.5px;top:102.2px;font-size:7px;color:#ffffff;transform:scaleX(1.018);">Top</span>
<span class="t" style="left:595.2px;top:118.4px;font-size:7px;color:#333333;transform:scaleX(0.768);">0</span>
<span class="t" style="left:655.9px;top:118.4px;font-size:7px;color:#333333;transform:scaleX(0.853);">0.5</span>
</section>
<section id="autoid-panel">
<span class="t b" style="left:198.0px;top:428.9px;font-size:8.5px;color:#ffffff;transform:scaleX(1.023);">AutoID</span>
<span class="t b" style="left:1008.5px;top:428.9px;font-size:8.5px;color:#ffffff;transform:scaleX(0.992);">in</span>
<span class="t" style="left:175.0px;top:451.9px;font-size:7px;color:#3a3a8c;transform:scaleX(0.856);">Searching</span>
<span class="t" style="left:186.5px;top:470.4px;font-size:7px;color:#3a3a9c;transform:scaleX(0.874);">Enabled in Idle</span>
<span class="t" style="left:186.5px;top:487.3px;font-size:7px;color:#222222;transform:scaleX(0.826);">Area Scan</span>
<span class="t" style="left:186.5px;top:507.0px;font-size:7px;color:#222222;transform:scaleX(0.870);">Perimeter Scan</span>
<span class="t" style="left:334.4px;top:451.9px;font-size:7px;color:#3a3a8c;transform:scaleX(0.877);">Processing Preference</span>
<span class="t" style="left:345.6px;top:470.1px;font-size:7px;color:#222222;transform:scaleX(0.908);">Performance</span>
<span class="t" style="left:345.6px;top:489.7px;font-size:7px;color:#222222;transform:scaleX(0.899);">Accuracy</span>
<span class="t" style="left:336.0px;top:508.6px;font-size:7.5px;color:#2d2d9a;transform:scaleX(0.845);">Similarity Threshold</span>
<span class="t" style="left:377.0px;top:524.9px;font-size:7px;color:#333333;transform:scaleX(0.895);">10 %</span>
</section>
<footer id="player">
<span class="t b" style="left:11.2px;top:561.2px;font-size:8px;color:#ffffff;transform:scaleX(0.711);">Sync</span>
<span class="t b" style="left:126.5px;top:561.2px;font-size:8px;color:#ffffff;transform:scaleX(0.720);">Results</span>
</footer>
</body>
</html>
